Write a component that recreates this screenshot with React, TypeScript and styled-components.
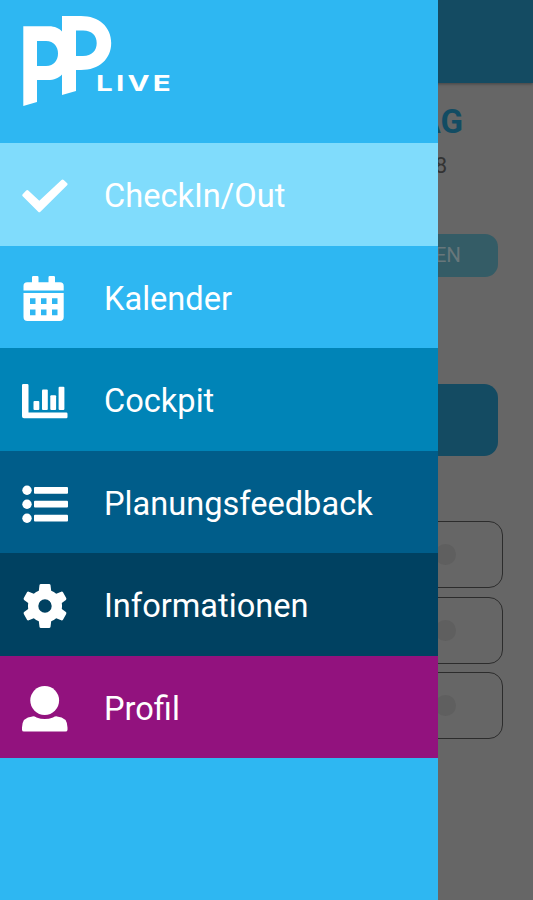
import React from "react";
import styled, { createGlobalStyle } from "styled-components";

const GlobalStyle = createGlobalStyle`
  * { box-sizing: border-box; }
  body { margin: 0; background: #666; font-family: Roboto, sans-serif; }
`;

const Screen = styled.div`
  position: relative;
  width: 533px;
  height: 900px;
  overflow: hidden;
  background: #666;
`;

const Content = styled.main`
  display: flex;
  flex-direction: column;
  align-items: flex-end;
`;

const AppBar = styled.header`
  width: 100%;
  height: 83px;
  background: #144b62;
  box-shadow: 0 1px 3px rgba(0, 0, 0, 0.35);
`;

const Heading = styled.h1`
  margin: 20px 70px 0 0;
  font-size: 33px;
  line-height: 38px;
  font-weight: 700;
  color: #124c63;
`;

const DateLine = styled.div`
  margin: 11px 86px 0 0;
  font-size: 22px;
  line-height: 28px;
  color: #333;
`;

const Pill = styled.div`
  width: 260px;
  height: 43px;
  margin: 54px 35px 0 0;
  padding-right: 37px;
  border-radius: 13px;
  background: #345c66;
  color: #68777b;
  font-size: 20.5px;
  line-height: 43px;
  text-align: right;
`;

const PrimaryPanel = styled.div`
  width: 462px;
  height: 72px;
  margin: 107px 35px 0 0;
  border-radius: 14px;
  background: #144b62;
`;

const Cards = styled.div`
  display: flex;
  flex-direction: column;
  gap: 8.7px;
  margin: 65px 30px 0 0;
`;

const Card = styled.div`
  display: flex;
  align-items: center;
  justify-content: flex-end;
  width: 473px;
  height: 67px;
  padding-right: 46px;
  border: 1.5px solid #2c2c2c;
  border-radius: 14px;
`;

const Dot = styled.span`
  width: 21px;
  height: 21px;
  border-radius: 50%;
  background: #5f5f5f;
`;

const Drawer = styled.aside`
  position: absolute;
  inset: 0 auto 0 0;
  width: 438px;
  background: #2eb7f2;
`;

const Brand = styled.div`
  height: 143px;
`;

const MenuRow = styled.a<{ $tone: string }>`
  display: flex;
  align-items: center;
  gap: 36px;
  height: 102.5px;
  padding: 4px 0 0 22px;
  background: ${(p) => p.$tone};
  color: #fff;
  font-size: 32.6px;
  line-height: 40px;
`;

const Glyph = styled.svg`
  display: block;
  flex: none;
  width: 46px;
  height: 46px;
  fill: currentColor;
`;

const Label = styled.span`
  white-space: nowrap;
`;

const Logo = () => (
  <svg width="180" height="120" viewBox="0 0 180 120" fill="#fff">
    <path
      fillRule="evenodd"
      d="M23.3 26.3H49C55 26.3 59 28.5 62 31.5V16H81C99 16 111.2 27 111.2 43S99 70 81 70H76V91L62 95V74.5C59 78 54 80 48 80H37V102L23.3 106ZM37 41V66H46C54 66 58 60 58 53.5S54 41 46 41ZM76 30.5V56H83C92 56 96.7 50.5 96.7 43S92 30.5 83 30.5Z"
    />
    <text
      x="96"
      y="90.6"
      fontFamily="Inter, sans-serif"
      fontWeight="700"
      fontSize="21.8"
      letterSpacing="2.4"
      textLength="78"
      lengthAdjust="spacingAndGlyphs"
    >
      LIVE
    </text>
  </svg>
);

const CheckIcon = () => (
  <Glyph viewBox="0 0 46 46">
    <path d="M4.2 17.5Q5.2 16.6 6.3 17.5L17.3 27.8L39.5 7Q40.6 6 41.7 7L45.2 10.3Q46 11.2 45.1 12.2L18.4 38.7Q17.3 39.7 16.2 38.7L.7 23.3Q-.2 22.2.7 21.2Z" />
  </Glyph>
);

const CalendarIcon = () => (
  <Glyph viewBox="0 0 46 46">
    <path d="M1.5 14.5V10Q1.5 6.3 5.2 6.3H10V1.2Q10 0 11.2 0H15.3Q16.5 0 16.5 1.2V6.3H26.5V1.2Q26.5 0 27.7 0H31.8Q33 0 33 1.2V6.3H38Q41.7 6.3 41.7 10V14.5Z" />
    <path
      fillRule="evenodd"
      d="M1.5 17H41.7V41Q41.7 45 37.7 45H5.5Q1.5 45 1.5 41ZM8 22.3V28H13.5V22.3ZM19 22.3V28H24.5V22.3ZM30 22.3V28H35.5V22.3ZM8 33.5V39.2H13.5V33.5ZM19 33.5V39.2H24.5V33.5ZM30 33.5V39.2H35.5V33.5Z"
    />
  </Glyph>
);

const ChartIcon = () => (
  <Glyph viewBox="0 0 46 46">
    <path d="M1.2 6H5.3Q6.5 6 6.5 7.2V34.5H44.3Q45.5 34.5 45.5 35.7V39Q45.5 40.2 44.3 40.2H2Q0 40.2 0 38.2V7.2Q0 6 1.2 6Z" />
    <rect x="11.5" y="23" width="5.8" height="9" rx="1" />
    <rect x="20" y="11.5" width="5.8" height="20.5" rx="1" />
    <rect x="28.3" y="17.3" width="5.8" height="14.7" rx="1" />
    <rect x="36.6" y="8.8" width="5.8" height="23.2" rx="1" />
  </Glyph>
);

const ListIcon = () => (
  <Glyph viewBox="0 0 46 46">
    <circle cx="5" cy="9.3" r="4.7" />
    <circle cx="5" cy="23.2" r="4.7" />
    <circle cx="5" cy="37.2" r="4.7" />
    <rect x="12" y="6" width="34" height="6.8" rx="1" />
    <rect x="12" y="19.8" width="34" height="6.8" rx="1" />
    <rect x="12" y="33.8" width="34" height="6.8" rx="1" />
  </Glyph>
);

const GearIcon = () => (
  <Glyph viewBox="0 0 46 46">
    <path
      fillRule="evenodd"
      d="M17.5 2Q17.7 1 19 1H27Q28.3 1 28.5 2L29.2 7.8Q32 8.9 34.2 10.8L39.2 8.7Q40.4 8.3 41 9.3L44.2 15.1Q44.7 16.2 43.9 17L39.8 20.1Q40.3 23 39.8 25.9L43.9 29Q44.7 29.8 44.2 30.9L41 36.7Q40.4 37.7 39.2 37.3L34.2 35.2Q32 37.1 29.2 38.2L28.5 44Q28.3 45 27 45H19Q17.7 45 17.5 44L16.8 38.2Q14 37.1 11.8 35.2L6.8 37.3Q5.6 37.7 5 36.7L1.8 30.9Q1.3 29.8 2.1 29L6.2 25.9Q5.7 23 6.2 20.1L2.1 17Q1.3 16.2 1.8 15.1L5 9.3Q5.6 8.3 6.8 8.7L11.8 10.8Q14 8.9 16.8 7.8ZM23 16.3A6.7 6.7 0 1 0 23 29.7A6.7 6.7 0 1 0 23 16.3Z"
    />
  </Glyph>
);

const PersonIcon = () => (
  <Glyph viewBox="0 0 46 46">
    <circle cx="22.7" cy="14.5" r="14.4" />
    <path d="M10.5 30.4Q12.5 30.2 14.5 31.5Q22.8 34.5 31 31.5Q33 30.2 35 30.4Q45.5 31 45.5 41.5V43.7Q45.5 45.6 43.5 45.6H2Q0 45.6 0 43.7V41.5Q0 31 10.5 30.4Z" />
  </Glyph>
);

const items = [
  { label: "CheckIn/Out", tone: "#80dcfc", Icon: CheckIcon },
  { label: "Kalender", tone: "#2eb7f2", Icon: CalendarIcon },
  { label: "Cockpit", tone: "#0084b7", Icon: ChartIcon },
  { label: "Planungsfeedback", tone: "#005d8a", Icon: ListIcon },
  { label: "Informationen", tone: "#004161", Icon: GearIcon },
  { label: "Profil", tone: "#92127e", Icon: PersonIcon },
];

export default function App() {
  return (
    <Screen>
      <GlobalStyle />
      <Content>
        <AppBar />
        <Heading>AG</Heading>
        <DateLine>8</DateLine>
        <Pill>EN</Pill>
        <PrimaryPanel />
        <Cards>
          {[0, 1, 2].map((n) => (
            <Card key={n}>
              <Dot />
            </Card>
          ))}
        </Cards>
      </Content>
      <Drawer>
        <Brand>
          <Logo />
        </Brand>
        <nav>
          {items.map(({ label, tone, Icon }) => (
            <MenuRow key={label} $tone={tone}>
              <Icon />
              <Label>{label}</Label>
            </MenuRow>
          ))}
        </nav>
      </Drawer>
    </Screen>
  );
}
